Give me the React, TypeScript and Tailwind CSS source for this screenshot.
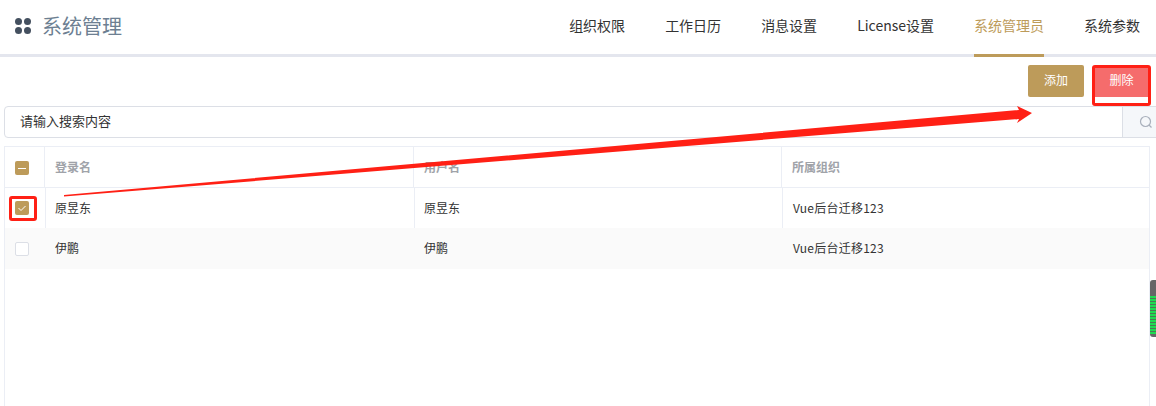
const cjk = "font-['Noto_Sans_CJK_SC','Noto_Sans',sans-serif]";

const navItems = ["组织权限", "工作日历", "消息设置", "License设置", "系统管理员", "系统参数"];

const rows = [
  { login: "原昱东", name: "原昱东", org: "Vue后台迁移123", checked: true },
  { login: "伊鹏", name: "伊鹏", org: "Vue后台迁移123", checked: false },
];

function Header() {
  return (
    <div className="flex h-[57px] items-stretch justify-between border-b-[3px] border-[#e4e6ee] bg-white pl-[15px] pr-[16px]">
      <div className="flex items-center gap-[11px] pb-[3px]">
        <div className="grid grid-cols-2 gap-[2px]">
          <span className="h-[7px] w-[7px] rounded-full bg-[#44505f]" />
          <span className="h-[7px] w-[7px] rounded-full bg-[#44505f]" />
          <span className="h-[7px] w-[7px] rounded-full bg-[#44505f]" />
          <span className="h-[7px] w-[7px] rounded-full bg-[#44505f]" />
        </div>
        <span className="text-[20px] leading-[28px] text-[#6d7f92]">系统管理</span>
      </div>
      <nav className="flex gap-[40px]">
        {navItems.map((item) => {
          const active = item === "系统管理员";
          return (
            <div
              key={item}
              className={[
                "-mb-[3px] flex items-center border-b-[3px] pb-[3px] text-[14px]",
                active ? "border-[#bd9b5a] text-[#bd9b5a]" : "border-transparent text-[#333333]",
              ].join(" ")}
            >
              {item}
            </div>
          );
        })}
      </nav>
    </div>
  );
}

function Toolbar() {
  return (
    <div className="flex h-[40px] items-end justify-end gap-[11px] pr-[8px]">
      <button type="button" className="h-[32px] w-[56px] rounded-[2px] bg-[#bd9b5a] pb-[2px] text-[12px] text-white">
        添加
      </button>
      <button type="button" className="h-[32px] w-[53px] bg-[#f56c6c] pb-[2px] text-[12px] text-white">
        删除
      </button>
    </div>
  );
}

function SearchBox() {
  return (
    <div className="ml-[4px] mr-[-14px] mt-[9px] flex h-[32px] items-stretch rounded-l-[4px] border border-[#dcdfe6] bg-white">
      <div className="flex flex-1 items-center pb-[2px] pl-[15px] text-[13px] text-[#333333]">请输入搜索内容</div>
      <div className="flex w-[47px] items-center justify-center border-l border-[#dcdfe6] bg-[#f5f7fa]">
        <svg width="14" height="14" viewBox="0 0 14 14" fill="none" stroke="#a9b0bc" strokeWidth="1.2">
          <circle cx="6.5" cy="6.5" r="5" />
          <path d="M10 10l2.5 2.5" />
        </svg>
      </div>
    </div>
  );
}

function Checkbox({ state }: { state: "none" | "checked" | "partial" }) {
  if (state === "none") {
    return <span className="block h-[14px] w-[14px] rounded-[2px] border border-[#dcdfe6] bg-white" />;
  }
  return (
    <span className="flex h-[14px] w-[14px] items-center justify-center rounded-[2px] bg-[#bd9b5a]">
      {state === "checked" ? (
        <svg width="10" height="10" viewBox="0 0 10 10" fill="none" stroke="white" strokeWidth="1">
          <path d="M1.5 5l2.5 2.5 4.5-4.5" />
        </svg>
      ) : (
        <span className="h-[1px] w-[8px] bg-white" />
      )}
    </span>
  );
}

function Table() {
  return (
    <div className="ml-[4px] mr-[6px] mt-[8px] h-[260px] border-x border-t border-[#ebeef5] bg-white text-[12px]">
      <div className="grid h-[41px] grid-cols-[40px_369px_368px_1fr] border-b border-[#ebeef5] font-bold text-[#a0a3a9]">
        <div className="flex items-center justify-center border-r border-[#ebeef5] pr-[6px] pt-[2px]">
          <Checkbox state="partial" />
        </div>
        <div className="flex items-center border-r border-[#ebeef5] pl-[10px]">登录名</div>
        <div className="flex items-center border-r border-[#ebeef5] pl-[10px]">用户名</div>
        <div className="flex items-center pl-[10px]">所属组织</div>
      </div>
      {rows.map((row) => (
        <div
          key={row.login}
          className={[
            "grid grid-cols-[41px_369px_368px_1fr] text-[#333333]",
            row.checked ? "h-[40px]" : "h-[41px] bg-[#fafafa]",
          ].join(" ")}
        >
          <div className={["flex items-center justify-center pr-[7px]", row.checked ? "border-r border-[#ebeef5]" : ""].join(" ")}>
            <Checkbox state={row.checked ? "checked" : "none"} />
          </div>
          <div className={["flex items-center pb-[1px] pl-[9px]", row.checked ? "border-r border-[#ebeef5]" : ""].join(" ")}>{row.login}</div>
          <div className={["flex items-center pb-[1px] pl-[9px]", row.checked ? "border-r border-[#ebeef5]" : ""].join(" ")}>{row.name}</div>
          <div className="flex items-center pb-[1px] pl-[10px] tracking-[0.25px]">{row.org}</div>
        </div>
      ))}
    </div>
  );
}

export default function App() {
  return (
    <div className={`relative h-[406px] w-[1156px] overflow-hidden bg-white ${cjk}`}>
      <Header />
      <Toolbar />
      <SearchBox />
      <Table />

      {/* annotations on top of the screenshot */}
      <svg className="absolute left-0 top-0" width="1156" height="406">
        <polygon points="64,195 1019,110 1017,106 1032,113 1017,123 1019,119 64,196.5" fill="#ff2015" />
      </svg>
      <div className="absolute left-[1092px] top-[65px] h-[41px] w-[59px] rounded-[3px] border-[3px] border-[#ff2015]" />
      <div className="absolute left-[9px] top-[196px] h-[25px] w-[28px] rounded-[3px] border-[3px] border-[#ff2015]" />

      {/* scroll handle at the window edge */}
      <div className="absolute left-[1150px] top-[280px] h-[57px] w-[6px] overflow-hidden rounded-l-[3px] bg-[#666666]">
        <div className="mt-[16px] h-[38px] bg-[repeating-linear-gradient(to_bottom,#1fdc50_0px,#1fdc50_2px,#4a7a55_2px,#4a7a55_3px)]" />
      </div>
    </div>
  );
}
